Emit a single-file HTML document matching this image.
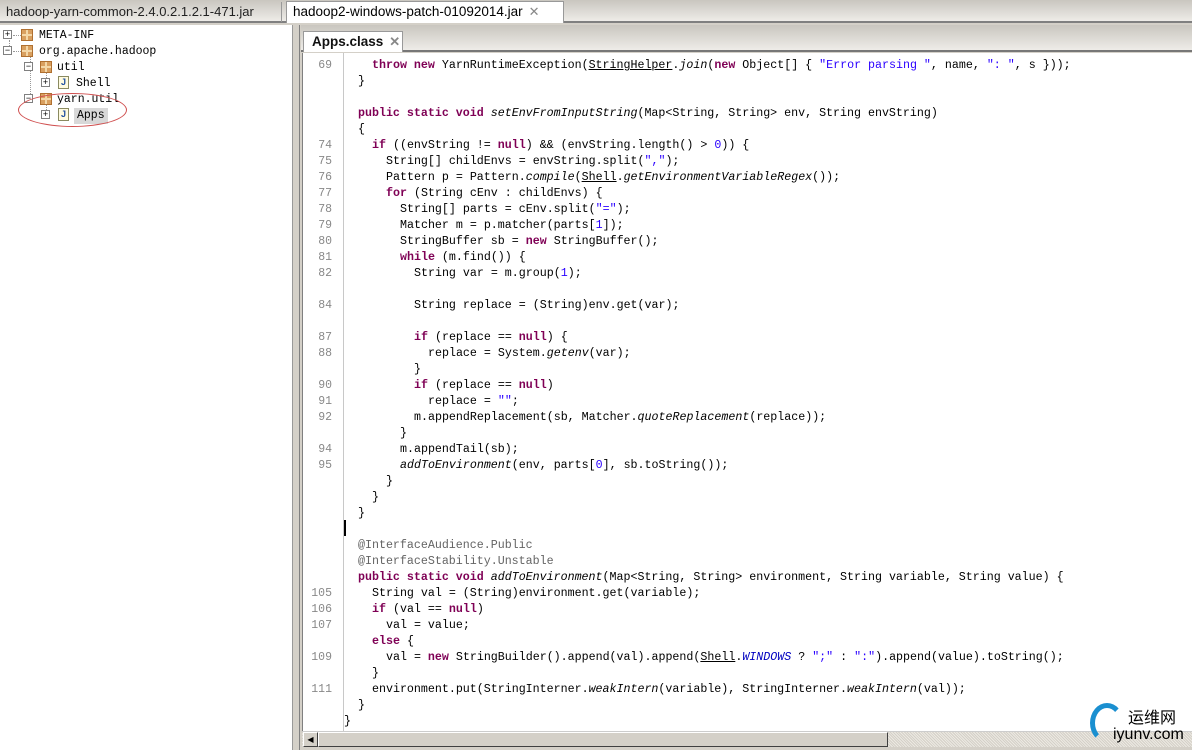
<!DOCTYPE html>
<html><head><meta charset="utf-8"><style>
*{margin:0;padding:0;box-sizing:border-box}
body{width:1192px;height:750px;overflow:hidden;background:#d4d0c8;position:relative;font-family:"Liberation Sans",sans-serif}
.topbar{position:absolute;left:0;top:0;width:1192px;height:23px;background:linear-gradient(#c9c6bf,#eeece8);border-bottom:2px solid #808080}
.tab1{position:absolute;left:0;top:2px;width:282px;height:20px;font-size:13px;color:#222;padding:2px 6px;border-right:1px solid #999}
.tab2{position:absolute;left:286px;top:1px;width:278px;height:22px;background:#fff;border:1px solid #999;border-bottom:none;font-size:13.5px;padding:2px 6px;color:#000}
.x{color:#888;font-size:13px;margin-left:6px}
.left{position:absolute;left:0;top:25px;width:293px;height:725px;background:#fff;border-right:1px solid #999}
.split{position:absolute;left:294px;top:25px;width:6px;height:725px;background:#d4d0c8;border-right:1px solid #808080}
.edbar{position:absolute;left:301px;top:25px;width:891px;height:27px;background:linear-gradient(#c9c6bf,#eeece8);border-bottom:2px solid #777}
.apptab{position:absolute;left:303px;top:31px;width:100px;height:21px;background:#fff;border:1px solid #999;border-bottom:none;font-size:13.5px;font-weight:bold;padding:2px 8px;color:#111}
.code{position:absolute;left:302px;top:53px;width:890px;height:678px;background:#fff;border-left:1px solid #808080}
.gut{position:absolute;left:343px;top:53px;width:1px;height:678px;background:#c8c8c8}
.ln{position:absolute;font:11.65px/16px "Liberation Mono",monospace;white-space:pre;color:#000;margin-top:2px}
.n{position:absolute;width:30px;left:302px;text-align:right;font:11.5px/16px "Liberation Mono",monospace;color:#888;margin-top:2px}
b{color:#7f0055}
.s{color:#2a00ff}
i{font-style:italic}
u{text-decoration:underline}
.a{color:#646464}
.tree{position:absolute;font:11.5px/16px "Liberation Mono","WenQuanYi Zen Hei",monospace;color:#000;white-space:pre;margin-top:1px}
.pm{position:absolute;width:9px;height:9px;border:1px solid #808080;background:#fff;font-size:9px;line-height:7px;text-align:center;color:#000}
.pk{position:absolute;width:12px;height:12px;background:#d9a060;border:1px solid #b07030}
.pk:before{content:"";position:absolute;left:4px;top:0;width:2px;height:10px;background:#f4d8a8}
.pk:after{content:"";position:absolute;left:0;top:4px;width:10px;height:2px;background:#f4d8a8}
.jf{position:absolute;width:11px;height:13px;border:1px solid #8a8a60;background:#fffbe0;font:bold 9px/11px "Liberation Sans";color:#2050a0;text-align:center}
.dot{position:absolute;border-left:1px dotted #999}
.doth{position:absolute;border-top:1px dotted #999}
.sb{position:absolute;left:302px;top:731px;width:890px;height:16px;background:repeating-linear-gradient(45deg,#d4d0c8 0 1px,#ece9e2 1px 2px);border-top:1px solid #ccc}
.thumb{position:absolute;left:318px;top:732px;width:570px;height:15px;background:#d4d0c8;border:1px solid;border-color:#fff #404040 #404040 #fff}
.arr{position:absolute;left:303px;top:732px;width:15px;height:15px;background:#d4d0c8;border:1px solid;border-color:#fff #404040 #404040 #fff;font-size:8px;line-height:13px;text-align:center}
</style></head><body>
<div class="topbar"></div>
<div class="tab1">hadoop-yarn-common-2.4.0.2.1.2.1-471.jar</div>
<div class="tab2">hadoop2-windows-patch-01092014.jar<span class="x">✕</span></div>
<div class="left"></div>
<div class="dot" style="left:9px;top:40px;height:12px"></div>
<div class="dot" style="left:30px;top:56px;height:44px"></div>
<div class="dot" style="left:46px;top:72px;height:12px"></div>
<div class="dot" style="left:46px;top:104px;height:12px"></div>
<div class="doth" style="left:13px;top:35px;width:8px"></div>
<div class="doth" style="left:13px;top:51px;width:8px"></div>
<div class="pm" style="left:3px;top:30px">+</div>
<div class="pk" style="left:21px;top:29px"></div>
<div class="tree" style="left:39px;top:27px">META-INF</div>
<div class="pm" style="left:3px;top:46px">−</div>
<div class="pk" style="left:21px;top:45px"></div>
<div class="tree" style="left:39px;top:43px">org.apache.hadoop</div>
<div class="pm" style="left:24px;top:62px">−</div>
<div class="pk" style="left:40px;top:61px"></div>
<div class="tree" style="left:57px;top:59px">util</div>
<div class="pm" style="left:41px;top:78px">+</div>
<div class="jf" style="left:58px;top:76px">J</div>
<div class="tree" style="left:76px;top:75px">Shell</div>
<div class="pm" style="left:24px;top:94px">−</div>
<div class="pk" style="left:40px;top:93px"></div>
<div class="tree" style="left:57px;top:91px">yarn.util</div>
<div class="pm" style="left:41px;top:110px">+</div>
<div class="jf" style="left:58px;top:108px">J</div>
<div class="tree" style="left:74px;top:107px;background:#d8d8d8;padding:0 3px">Apps</div>
<div style="position:absolute;left:18px;top:93px;width:109px;height:34px;border:1px solid #d05050;border-radius:50%"></div>
<div class="split"></div>
<div class="edbar"></div>
<div class="apptab">Apps.class<span class="x">✕</span></div>
<div class="code"></div>
<div class="gut"></div>
<div style="position:absolute;left:344px;top:520px;width:2px;height:16px;background:#000"></div>

<div class="n" style="top:56px">69</div><div class="ln" style="left:372px;top:56px"><b>throw new</b> YarnRuntimeException(<u>StringHelper</u>.<i>join</i>(<b>new</b> Object[] { <span class="s">"Error parsing "</span>, name, <span class="s">": "</span>, s }));</div>
<div class="ln" style="left:358px;top:72px">}</div>
<div class="ln" style="left:358px;top:104px"><b>public static void</b> <i>setEnvFromInputString</i>(Map&lt;String, String&gt; env, String envString)</div>
<div class="ln" style="left:358px;top:120px">{</div>
<div class="n" style="top:136px">74</div><div class="ln" style="left:372px;top:136px"><b>if</b> ((envString != <b>null</b>) &amp;&amp; (envString.length() &gt; <span class="s">0</span>)) {</div>
<div class="n" style="top:152px">75</div><div class="ln" style="left:386px;top:152px">String[] childEnvs = envString.split(<span class="s">","</span>);</div>
<div class="n" style="top:168px">76</div><div class="ln" style="left:386px;top:168px">Pattern p = Pattern.<i>compile</i>(<u>Shell</u>.<i>getEnvironmentVariableRegex</i>());</div>
<div class="n" style="top:184px">77</div><div class="ln" style="left:386px;top:184px"><b>for</b> (String cEnv : childEnvs) {</div>
<div class="n" style="top:200px">78</div><div class="ln" style="left:400px;top:200px">String[] parts = cEnv.split(<span class="s">"="</span>);</div>
<div class="n" style="top:216px">79</div><div class="ln" style="left:400px;top:216px">Matcher m = p.matcher(parts[<span class="s">1</span>]);</div>
<div class="n" style="top:232px">80</div><div class="ln" style="left:400px;top:232px">StringBuffer sb = <b>new</b> StringBuffer();</div>
<div class="n" style="top:248px">81</div><div class="ln" style="left:400px;top:248px"><b>while</b> (m.find()) {</div>
<div class="n" style="top:264px">82</div><div class="ln" style="left:414px;top:264px">String var = m.group(<span class="s">1</span>);</div>
<div class="n" style="top:296px">84</div><div class="ln" style="left:414px;top:296px">String replace = (String)env.get(var);</div>
<div class="n" style="top:328px">87</div><div class="ln" style="left:414px;top:328px"><b>if</b> (replace == <b>null</b>) {</div>
<div class="n" style="top:344px">88</div><div class="ln" style="left:428px;top:344px">replace = System.<i>getenv</i>(var);</div>
<div class="ln" style="left:414px;top:360px">}</div>
<div class="n" style="top:376px">90</div><div class="ln" style="left:414px;top:376px"><b>if</b> (replace == <b>null</b>)</div>
<div class="n" style="top:392px">91</div><div class="ln" style="left:428px;top:392px">replace = <span class="s">""</span>;</div>
<div class="n" style="top:408px">92</div><div class="ln" style="left:414px;top:408px">m.appendReplacement(sb, Matcher.<i>quoteReplacement</i>(replace));</div>
<div class="ln" style="left:400px;top:424px">}</div>
<div class="n" style="top:440px">94</div><div class="ln" style="left:400px;top:440px">m.appendTail(sb);</div>
<div class="n" style="top:456px">95</div><div class="ln" style="left:400px;top:456px"><i>addToEnvironment</i>(env, parts[<span class="s">0</span>], sb.toString());</div>
<div class="ln" style="left:386px;top:472px">}</div>
<div class="ln" style="left:372px;top:488px">}</div>
<div class="ln" style="left:358px;top:504px">}</div>
<div class="ln a" style="left:358px;top:536px">@InterfaceAudience.Public</div>
<div class="ln a" style="left:358px;top:552px">@InterfaceStability.Unstable</div>
<div class="ln" style="left:358px;top:568px"><b>public static void</b> <i>addToEnvironment</i>(Map&lt;String, String&gt; environment, String variable, String value) {</div>
<div class="n" style="top:584px">105</div><div class="ln" style="left:372px;top:584px">String val = (String)environment.get(variable);</div>
<div class="n" style="top:600px">106</div><div class="ln" style="left:372px;top:600px"><b>if</b> (val == <b>null</b>)</div>
<div class="n" style="top:616px">107</div><div class="ln" style="left:386px;top:616px">val = value;</div>
<div class="ln" style="left:372px;top:632px"><b>else</b> {</div>
<div class="n" style="top:648px">109</div><div class="ln" style="left:386px;top:648px">val = <b>new</b> StringBuilder().append(val).append(<u>Shell</u>.<i style="color:#0000c0">WINDOWS</i> ? <span class="s">";"</span> : <span class="s">":"</span>).append(value).toString();</div>
<div class="ln" style="left:372px;top:664px">}</div>
<div class="n" style="top:680px">111</div><div class="ln" style="left:372px;top:680px">environment.put(StringInterner.<i>weakIntern</i>(variable), StringInterner.<i>weakIntern</i>(val));</div>
<div class="ln" style="left:358px;top:696px">}</div>
<div class="ln" style="left:344px;top:712px">}</div>

<div class="sb"></div>
<div class="arr">◀</div>
<div class="thumb"></div>
<div style="position:absolute;left:1090px;top:703px;width:34px;height:40px;border:5px solid #1a8fd0;border-right-color:transparent;border-bottom-color:transparent;border-radius:50%"></div>
<div style="position:absolute;left:1128px;top:704px;font:16px "Liberation Sans","WenQuanYi Zen Hei",sans-serif;color:#3a7ab0">运维网</div>
<div style="position:absolute;left:1113px;top:726px;font:bold 15px "Liberation Sans",sans-serif;color:#1a8fd0">iyunv.com</div>
</body></html>
